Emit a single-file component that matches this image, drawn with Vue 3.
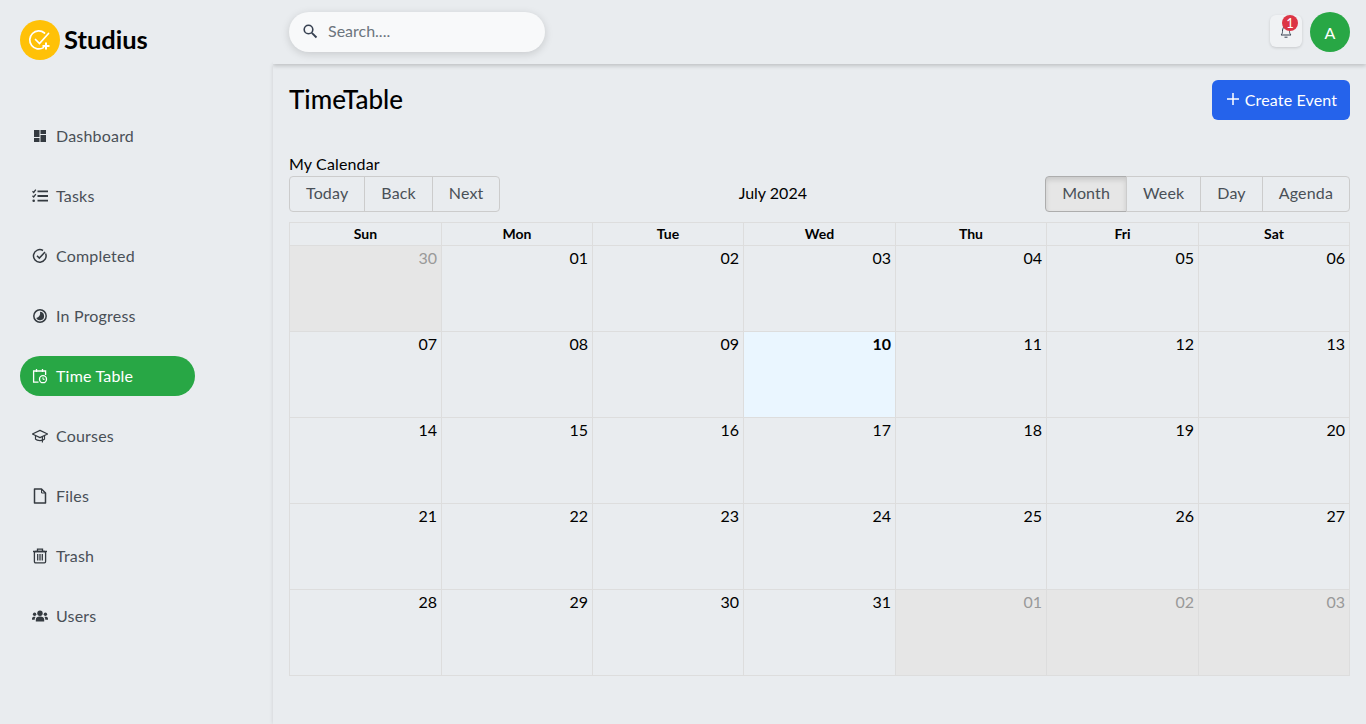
<script setup>
const navItems = [
  { label: 'Dashboard', icon: 'dashboard' },
  { label: 'Tasks', icon: 'tasks' },
  { label: 'Completed', icon: 'completed' },
  { label: 'In Progress', icon: 'progress' },
  { label: 'Time Table', icon: 'timetable', active: true },
  { label: 'Courses', icon: 'courses' },
  { label: 'Files', icon: 'files' },
  { label: 'Trash', icon: 'trash' },
  { label: 'Users', icon: 'users' }
]

const weekdays = ['Sun', 'Mon', 'Tue', 'Wed', 'Thu', 'Fri', 'Sat']

const pad = (n) => String(n).padStart(2, '0')

// June 30 to August 3, five rows of seven
const days = []
days.push({ text: '30', off: true })
for (let d = 1; d <= 31; d++) days.push({ text: pad(d), today: d === 10 })
for (let d = 1; d <= 3; d++) days.push({ text: pad(d), off: true })
const weeks = []
for (let i = 0; i < days.length; i += 7) weeks.push(days.slice(i, i + 7))
</script>

<template>
  <div class="layout">
    <aside class="sidebar">
      <div class="brand">
        <span class="logo">
          <svg width="24" height="24" viewBox="0 0 24 24" fill="none" stroke="#fff" stroke-width="2" stroke-linecap="round">
            <path d="M16.5 5a9 9 0 1 0-1 14.6" stroke-width="1.7" />
            <path d="M7.5 11.5l4 4 9-10" stroke-width="1.7" />
            <path d="M14.5 18h7M18 14.5v7" stroke-linecap="butt" />
          </svg>
        </span>
        <span class="brand-name">Studius</span>
      </div>
      <nav class="nav">
        <a v-for="item in navItems" :key="item.label" class="nav-item" :class="{ active: item.active }">
          <svg class="nav-icon" viewBox="0 0 16 16" width="16" height="16">
            <g v-if="item.icon === 'dashboard'" fill="currentColor">
              <rect x="2" y="2" width="5.500" height="7" />
              <rect x="8.500" y="2" width="5.500" height="4" />
              <rect x="8.500" y="7" width="5.500" height="7" />
              <rect x="2" y="10" width="5.500" height="4" />
            </g>
            <g v-else-if="item.icon === 'tasks'" fill="none" stroke="currentColor">
              <path d="M5.500 3.300H16M5.500 8H16M5.500 12.700H16" stroke-width="1.800" />
              <path d="M0.500 3.200l1.200 1.200L3.800 1.600M0.500 7.700l1.200 1.200 2.100-2.800" stroke-width="1.300" />
              <circle cx="1.700" cy="12.700" r="1.300" fill="currentColor" stroke="none" />
            </g>
            <g v-else-if="item.icon === 'completed'" fill="none" stroke="currentColor" stroke-width="1.500">
              <path d="M13.600 5.500A6.300 6.300 0 1 1 11 2.500" />
              <path d="M5 7.800l2.300 2.300 5.700-6" />
            </g>
            <g v-else-if="item.icon === 'progress'">
              <circle cx="8" cy="8" r="6.200" fill="none" stroke="currentColor" stroke-width="1.500" />
              <path d="M8 3.800A4.200 4.200 0 1 1 4.200 10 5 5 0 0 0 8 3.800z" fill="currentColor" />
            </g>
            <g v-else-if="item.icon === 'timetable'" fill="none" stroke="currentColor" stroke-width="1.300">
              <path d="M6.500 14.200H1.600V3h12v4" />
              <path d="M4.500 1v3M10.500 1v3" />
              <circle cx="11" cy="11.200" r="3.500" />
              <path d="M11 9.300v2h1.600" stroke-width="1" />
            </g>
            <g v-else-if="item.icon === 'courses'" fill="none" stroke="currentColor" stroke-width="1.200" stroke-linejoin="round">
              <path d="M0.400 6L8 2.400 15.600 6 8 9.600z" />
              <path d="M3.500 7.600v3.600C5 13 11 13 12.500 11.200V7.600" />
              <path d="M10.400 8.600v6" />
            </g>
            <g v-else-if="item.icon === 'files'" fill="none" stroke="currentColor" stroke-width="1.500" stroke-linejoin="round">
              <path d="M2.500 1h7l4 4v10h-11z" />
              <path d="M9.500 1v4h4" stroke-width="1" />
            </g>
            <g v-else-if="item.icon === 'trash'" fill="none" stroke="currentColor" stroke-width="1.300">
              <path d="M1 3.500h14M5.500 3.500V1.200h5v2.300" />
              <rect x="2.400" y="3.500" width="11.200" height="11.300" rx="1.200" />
              <path d="M5.700 6v6.500M8 6v6.500M10.300 6v6.500" />
            </g>
            <g v-else fill="currentColor">
              <circle cx="8" cy="5.200" r="2.700" />
              <path d="M3.800 13.600v-1.800C3.800 9.800 5.400 8.600 8 8.600s4.200 1.200 4.200 3.200v1.800z" />
              <circle cx="2.600" cy="6.200" r="1.700" />
              <circle cx="13.400" cy="6.200" r="1.700" />
              <path d="M0 11.700v-1c0-1.300 1-1.900 2.600-1.900.5 0 .8 0 .9.1-.6.7-.8 1.600-.8 2.800zM16 11.700v-1c0-1.300-1-1.900-2.600-1.900-.5 0-.8 0-.9.1.6.7.8 1.600.8 2.800z" />
            </g>
          </svg>
          <span class="nav-label">{{ item.label }}</span>
        </a>
      </nav>
    </aside>

    <div class="main">
      <header class="topbar">
        <div class="search">
          <svg width="16" height="16" viewBox="0 0 16 16" fill="none" stroke="#374151" stroke-width="1.600">
            <circle cx="6.500" cy="6.500" r="4.300" />
            <path d="M9.800 9.800L14.500 14.500" stroke-width="1.900" />
          </svg>
          <span class="search-text">Search....</span>
        </div>
        <div class="top-actions">
          <div class="bell">
            <svg width="16" height="16" viewBox="0 0 16 16" fill="none" stroke="#374151" stroke-width="1">
              <path d="M3 12h10c-1-1-1.500-2-1.500-3.500V7a3.500 3.500 0 0 0-7 0v1.500C4.500 10 4 11 3 12z" />
              <path d="M6.500 14.200h3" />
            </svg>
            <span class="badge">1</span>
          </div>
          <div class="avatar">A</div>
        </div>
      </header>

      <main class="content">
        <div class="page-head">
          <h1>TimeTable</h1>
          <button class="create">
            <svg width="16" height="16" viewBox="0 0 16 16" stroke="#fff" stroke-width="1.500">
              <path d="M8 2v12M2 8h12" />
            </svg>
            Create Event
          </button>
        </div>

        <div class="cal-title">My Calendar</div>
        <div class="toolbar">
          <div class="btn-group">
            <button>Today</button>
            <button>Back</button>
            <button>Next</button>
          </div>
          <span class="toolbar-label">July 2024</span>
          <div class="btn-group">
            <button class="on">Month</button>
            <button>Week</button>
            <button>Day</button>
            <button>Agenda</button>
          </div>
        </div>

        <div class="calendar">
          <div class="cal-head">
            <div v-for="d in weekdays" :key="d" class="head-cell">{{ d }}</div>
          </div>
          <div v-for="(week, w) in weeks" :key="w" class="week">
            <div
              v-for="(day, i) in week"
              :key="i"
              class="day"
              :class="{ off: day.off, today: day.today }"
            >{{ day.text }}</div>
          </div>
        </div>
      </main>
    </div>
  </div>
</template>

<style scoped>
.layout {
  display: flex;
  height: 724px;
  background: #e9ecef;
  color: #000;
  font-family: Lato, "Noto Sans", sans-serif;
  overflow: hidden;
}

/* sidebar */
.sidebar {
  width: 273px;
  flex-shrink: 0;
  padding: 20px;
  box-sizing: border-box;
}
.brand {
  display: flex;
  align-items: center;
  gap: 4px;
  height: 40px;
}
.logo {
  width: 40px;
  height: 40px;
  border-radius: 50%;
  background: #ffc107;
  display: flex;
  align-items: center;
  justify-content: center;
}
.brand-name {
  font-size: 25.500px;
  font-weight: 700;
  padding-bottom: 2px;
}
.nav {
  margin-top: 56px;
  display: flex;
  flex-direction: column;
  gap: 20px;
}
.nav-item {
  display: flex;
  align-items: center;
  gap: 8px;
  width: 175px;
  height: 40px;
  padding: 0 12px;
  box-sizing: border-box;
  border-radius: 20px;
  font-size: 16px;
  letter-spacing: 0.2px;
  color: #495057;
}
.nav-label {
  padding-bottom: 2px;
}
.nav-item.active {
  background: #28a745;
  color: #fff;
}
.nav-icon {
  flex-shrink: 0;
  color: #343a40;
}
.nav-item.active .nav-icon {
  color: #fff;
}

/* top bar */
.main {
  flex: 1;
  min-width: 0;
  display: flex;
  flex-direction: column;
}
.topbar {
  height: 64px;
  flex-shrink: 0;
  display: flex;
  align-items: center;
  justify-content: space-between;
  padding: 0 16px;
  box-sizing: border-box;
  background: #e9ecef;
  box-shadow: 0 2px 4px rgba(0, 0, 0, 0.18);
  clip-path: inset(0 0 -10px 0);
  position: relative;
  z-index: 1;
}
.search {
  width: 256px;
  height: 40px;
  border-radius: 20px;
  background: #f8f9fa;
  box-shadow: 0 2px 8px rgba(0, 0, 0, 0.15);
  display: flex;
  align-items: center;
  gap: 10px;
  padding: 0 13px 2px;
  box-sizing: border-box;
}
.search-text {
  font-size: 16px;
  color: #6c757d;
  padding-bottom: 2px;
}
.top-actions {
  display: flex;
  align-items: center;
  gap: 8px;
}
.bell {
  width: 32px;
  height: 32px;
  margin-bottom: 2px;
  border-radius: 6px;
  background: #f0f2f4;
  box-shadow: 0 1px 3px rgba(0, 0, 0, 0.15);
  display: flex;
  align-items: center;
  justify-content: center;
  position: relative;
}
.badge {
  position: absolute;
  top: 0;
  left: 12px;
  width: 16px;
  height: 16px;
  border-radius: 50%;
  background: #dc3545;
  color: #fff;
  font-size: 13px;
  line-height: 16px;
  text-align: center;
}
.avatar {
  width: 40px;
  height: 40px;
  border-radius: 50%;
  background: #28a745;
  color: #fff;
  font-size: 16px;
  display: flex;
  align-items: center;
  justify-content: center;
}

/* page */
.content {
  flex: 1;
  padding: 16px;
  box-sizing: border-box;
  display: flex;
  flex-direction: column;
  box-shadow: 0 0 4px rgba(0, 0, 0, 0.12);
}
.page-head {
  display: flex;
  align-items: center;
  justify-content: space-between;
  height: 40px;
}
.page-head h1 {
  margin: 0;
  padding-bottom: 2px;
  font-size: 26px;
  font-weight: 500;
}
.create {
  height: 40px;
  width: 138px;
  padding: 0 0 2px;
  border: none;
  border-radius: 6px;
  background: #2563eb;
  color: #fff;
  font: inherit;
  font-size: 16px;
  letter-spacing: 0.15px;
  display: flex;
  align-items: center;
  justify-content: center;
  gap: 4px;
}
.cal-title {
  margin-top: 34px;
  margin-bottom: 2px;
  font-size: 16px;
  letter-spacing: 0.15px;
  line-height: 20px;
}
.toolbar {
  display: flex;
  align-items: center;
  justify-content: space-between;
  height: 36px;
  margin-bottom: 10px;
}
.toolbar-label {
  font-size: 16px;
  padding-bottom: 3px;
}
.btn-group {
  display: flex;
}
.btn-group button {
  height: 36px;
  padding: 0 16px 3px;
  border: 1px solid #ccc;
  margin-left: -1px;
  background: transparent;
  color: #495057;
  font: inherit;
  font-size: 16px;
  letter-spacing: 0.15px;
}
.btn-group button:first-child {
  margin-left: 0;
  border-radius: 4px 0 0 4px;
}
.btn-group button:last-child {
  border-radius: 0 4px 4px 0;
}
.btn-group button.on {
  background: #e6e6e6;
  border-color: #adadad;
  box-shadow: inset 0 3px 5px rgba(0, 0, 0, 0.125);
}

/* calendar */
.calendar {
  --cols: 151px 151px 151px 152px 151px 152px 151px;
  height: 454px;
  border: 1px solid #ddd;
  box-sizing: border-box;
  display: flex;
  flex-direction: column;
}
.cal-head {
  display: grid;
  grid-template-columns: var(--cols);
  height: 22px;
}
.head-cell {
  font-size: 14px;
  font-weight: 700;
  line-height: 22px;
  text-align: center;
  border-left: 1px solid #ddd;
}
.head-cell:first-child {
  border-left: none;
}
.week {
  flex: 1;
  display: grid;
  grid-template-columns: var(--cols);
  border-top: 1px solid #ddd;
}
.day {
  border-left: 1px solid #ddd;
  padding: 0 4px;
  text-align: right;
  font-size: 16px;
  line-height: 23px;
}
.day:first-child {
  border-left: none;
}
.day.off {
  background: #e6e6e6;
  color: #999;
}
.day.today {
  background: #eaf6ff;
  font-weight: 700;
}
</style>
